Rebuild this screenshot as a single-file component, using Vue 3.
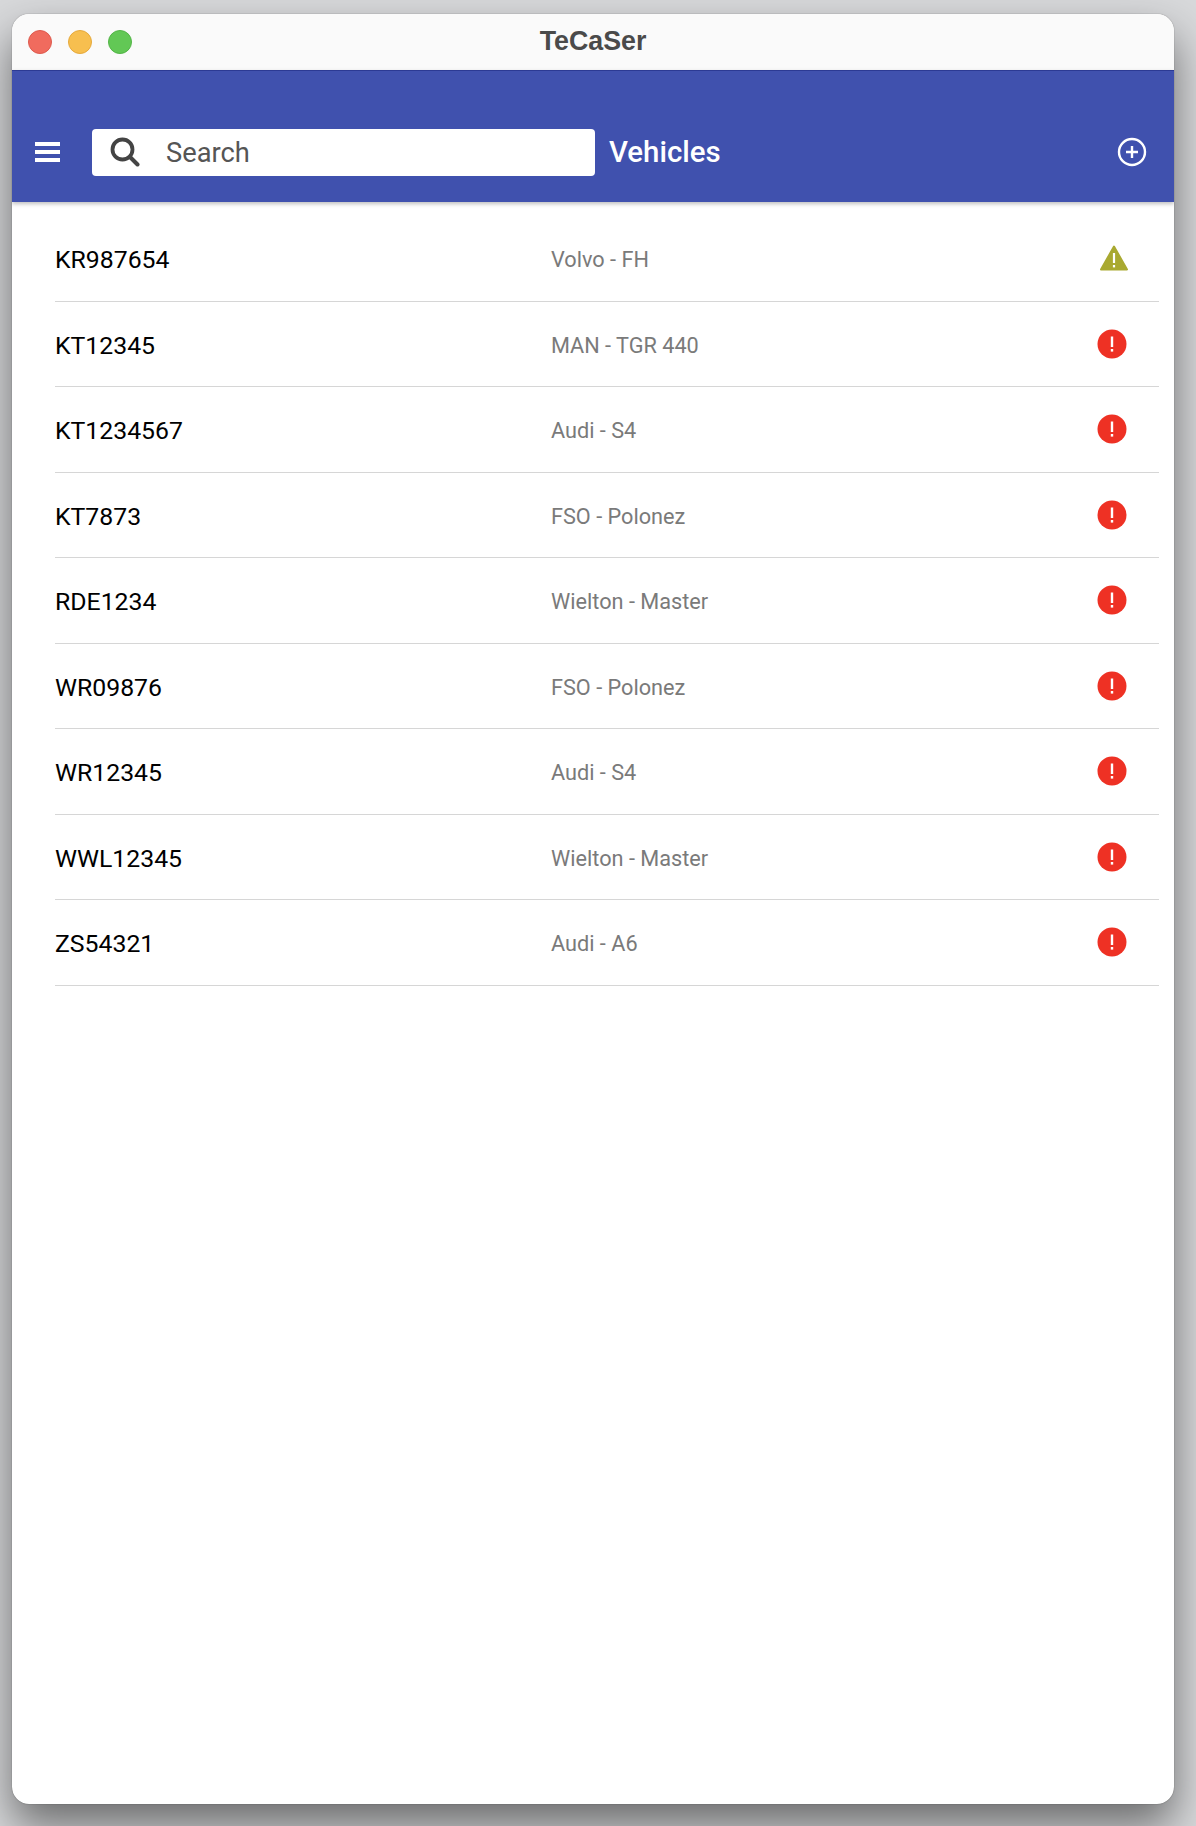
<template>
  <div class="desktop">
    <div class="window">
      <!-- Title bar -->
      <div class="titlebar">
        <div class="lights">
          <span class="light red"></span>
          <span class="light yellow"></span>
          <span class="light green"></span>
        </div>
        <span class="title">TeCaSer</span>
      </div>

      <!-- Toolbar -->
      <div class="toolbar">
        <svg class="menu-icon" viewBox="0 0 25 20" width="25" height="20">
          <rect x="0" y="0" width="25" height="4" fill="#fff" />
          <rect x="0" y="8" width="25" height="4" fill="#fff" />
          <rect x="0" y="16" width="25" height="4" fill="#fff" />
        </svg>
        <div class="search">
          <svg class="search-icon" viewBox="0 0 30 30" width="30" height="30">
            <circle cx="12.5" cy="12.5" r="10" fill="none" stroke="#444" stroke-width="3.8" />
            <path d="M20 20 L27.5 27.5" fill="none" stroke="#444" stroke-width="4" stroke-linecap="round" />
          </svg>
          <span class="search-text">Search</span>
        </div>
        <span class="page-title">Vehicles</span>
        <svg class="add-icon" viewBox="0 0 30 30" width="30" height="30">
          <circle cx="15" cy="15" r="13" fill="none" stroke="#fff" stroke-width="2.4" />
          <path d="M15 9 V21 M9 15 H21" fill="none" stroke="#fff" stroke-width="2.4" />
        </svg>
      </div>

      <!-- Vehicle list -->
      <div class="list">
        <div class="row" v-for="v in vehicles" :key="v.plate">
          <span class="plate">{{ v.plate }}</span>
          <span class="model">{{ v.model }}</span>
          <svg v-if="v.status === 'warn'" class="status warn" viewBox="0 0 28 26" width="28" height="26">
            <path d="M14 1.5 L27 24.5 H1 Z" fill="#a9a931" stroke="#a9a931" stroke-width="2" stroke-linejoin="round" />
            <path d="M14 8 V18" stroke="#fff" stroke-width="2.2" fill="none" />
            <rect x="12.9" y="20" width="2.2" height="2.4" fill="#fff" />
          </svg>
          <svg v-else class="status error" viewBox="0 0 30 30" width="30" height="30">
            <circle cx="15" cy="15" r="14.5" fill="#ee3124" />
            <path d="M15 7.5 V18" stroke="#fff" stroke-width="2.4" fill="none" />
            <rect x="13.8" y="20" width="2.4" height="2.6" fill="#fff" />
          </svg>
        </div>
      </div>
    </div>
  </div>
</template>

<script setup>
const vehicles = [
  { plate: 'KR987654', model: 'Volvo - FH', status: 'warn' },
  { plate: 'KT12345', model: 'MAN - TGR 440', status: 'error' },
  { plate: 'KT1234567', model: 'Audi - S4', status: 'error' },
  { plate: 'KT7873', model: 'FSO - Polonez', status: 'error' },
  { plate: 'RDE1234', model: 'Wielton - Master', status: 'error' },
  { plate: 'WR09876', model: 'FSO - Polonez', status: 'error' },
  { plate: 'WR12345', model: 'Audi - S4', status: 'error' },
  { plate: 'WWL12345', model: 'Wielton - Master', status: 'error' },
  { plate: 'ZS54321', model: 'Audi - A6', status: 'error' }
]
</script>

<style>
html,
body {
  margin: 0;
  background: #d8d9db;
}
</style>

<style scoped>
.desktop {
  width: 1196px;
  height: 1826px;
  padding: 14px 22px 22px 12px;
  box-sizing: border-box;
  overflow: hidden;
  background: #d8d9db;
}

.window {
  height: 100%;
  display: flex;
  flex-direction: column;
  background: #fff;
  border-radius: 17px;
  overflow: hidden;
  box-shadow: 0 0 1px rgba(0, 0, 0, 0.65), 0 22px 44px rgba(0, 0, 0, 0.5);
  font-family: Roboto, sans-serif;
}

.titlebar {
  position: relative;
  height: 56px;
  flex: none;
  display: flex;
  align-items: center;
  justify-content: center;
  background: #fafafa;
}

.lights {
  position: absolute;
  left: 16px;
  top: 16px;
  display: flex;
  gap: 16px;
}

.light {
  width: 24px;
  height: 24px;
  border-radius: 50%;
  box-sizing: border-box;
}

.light.red {
  background: #f06b5e;
  border: 1px solid #dd5a4e;
}

.light.yellow {
  background: #f7bf4f;
  border: 1px solid #e5a93c;
}

.light.green {
  background: #62c855;
  border: 1px solid #53b447;
}

.title {
  margin-bottom: 2px;
  font-family: 'Liberation Sans', sans-serif;
  font-weight: 700;
  font-size: 26.8px;
  color: #4a4a4a;
}

.toolbar {
  height: 132px;
  flex: none;
  box-sizing: border-box;
  padding: 58px 27px 27px 23px;
  display: flex;
  align-items: center;
  background: #4051ae;
  border-top: 1px solid #2c3a94;
  box-shadow: 0 2px 4px rgba(0, 0, 0, 0.25);
  z-index: 1;
}

.menu-icon {
  flex: none;
  margin-right: 32px;
}

.search {
  width: 503px;
  height: 47px;
  flex: none;
  display: flex;
  align-items: center;
  padding-left: 18px;
  box-sizing: border-box;
  background: #fff;
  border-radius: 4px;
}

.search-icon {
  flex: none;
  margin-right: 26px;
}

.search-text {
  padding-top: 2px;
  font-size: 27.3px;
  color: #555;
}

.page-title {
  margin-left: 14px;
  font-size: 29.4px;
  font-weight: 500;
  color: #fff;
}

.add-icon {
  flex: none;
  margin-left: auto;
}

.list {
  padding: 14px 15px 0 43px;
}

.row {
  height: 85.5px;
  box-sizing: border-box;
  display: flex;
  align-items: center;
  border-bottom: 1px solid #d6d6d6;
}

.plate {
  width: 496px;
  flex: none;
  padding-top: 3px;
  font-size: 24.8px;
  color: #000;
}

.model {
  flex: 1;
  padding-top: 3px;
  font-size: 21.7px;
  color: #7a7a7a;
}

.status {
  flex: none;
}

.status.warn {
  margin-right: 31px;
}

.status.error {
  margin-right: 32px;
}
</style>
